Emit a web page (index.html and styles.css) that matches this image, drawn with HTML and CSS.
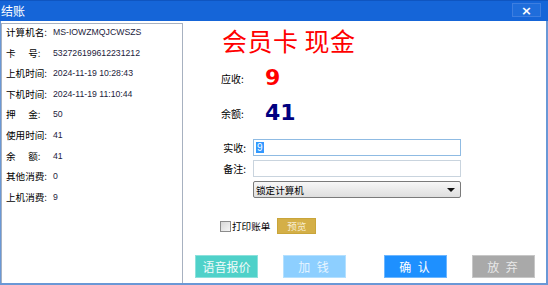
FILE: index.html
```html
<!DOCTYPE html>
<html lang="zh-CN">
  <head>
    <meta charset="UTF-8" />
    <title>结账</title>
    <link rel="stylesheet" href="styles.css">
  </head>
  <body>
    <div class="window">
      <div class="titlebar">
        <span class="title">结账</span>
        <button class="close-btn">×</button>
      </div>

      <div class="main">
        <div class="info-panel">
          <div class="info-row"><span class="info-label">计算机名:</span><span class="info-value">MS-IOWZMQJCWSZS</span></div>
          <div class="info-row"><span class="info-label spread">卡<i></i>号:</span><span class="info-value">532726199612231212</span></div>
          <div class="info-row"><span class="info-label">上机时间:</span><span class="info-value">2024-11-19 10:28:43</span></div>
          <div class="info-row"><span class="info-label">下机时间:</span><span class="info-value">2024-11-19 11:10:44</span></div>
          <div class="info-row"><span class="info-label spread">押<i></i>金:</span><span class="info-value">50</span></div>
          <div class="info-row"><span class="info-label">使用时间:</span><span class="info-value">41</span></div>
          <div class="info-row"><span class="info-label spread">余<i></i>额:</span><span class="info-value">41</span></div>
          <div class="info-row"><span class="info-label">其他消费:</span><span class="info-value">0</span></div>
          <div class="info-row"><span class="info-label">上机消费:</span><span class="info-value">9</span></div>
        </div>

        <div class="checkout">
          <h1 class="pay-type">会员卡 现金</h1>

          <div class="amount-row">
            <span class="amount-label">应收:</span>
            <span class="amount-value due">9</span>
          </div>
          <div class="amount-row balance">
            <span class="amount-label">余额:</span>
            <span class="amount-value left">41</span>
          </div>

          <div class="form">
            <div class="form-row">
              <label class="form-label">实收:</label>
              <div class="form-input focused"><span class="selected">9</span></div>
            </div>
            <div class="form-row">
              <label class="form-label">备注:</label>
              <div class="form-input"></div>
            </div>
            <div class="form-row">
              <span class="form-label"></span>
              <div class="form-select">
                <span>锁定计算机</span>
                <span class="arrow"></span>
              </div>
            </div>
          </div>

          <div class="print-row">
            <span class="checkbox"></span>
            <span class="print-label">打印账单</span>
            <button class="preview-btn">预览</button>
          </div>

          <div class="btn-row">
            <button class="btn btn-voice">语音报价</button>
            <button class="btn btn-add">加 钱</button>
            <button class="btn btn-confirm">确 认</button>
            <button class="btn btn-cancel">放 弃</button>
          </div>
        </div>
      </div>
    </div>
  </body>
</html>
```

FILE: styles.css
```css
* {
  box-sizing: border-box;
}

body {
  margin: 0;
  font-family: "Noto Sans CJK SC", "Liberation Sans", sans-serif;
  background-color: #ffffff;
}

.window {
  width: 548px;
  height: 285px;
  display: flex;
  flex-direction: column;
}

.titlebar {
  height: 21px;
  background-color: #1565d8;
  border-top: 1px solid #0f55c0;
  display: flex;
  justify-content: space-between;
  align-items: center;
  padding: 0 7px 0 1px;
}

.title {
  color: #ffffff;
  font-size: 12px;
  line-height: 1;
}

.close-btn {
  width: 29px;
  height: 14px;
  margin-top: -2px;
  padding: 0;
  border: 1px solid #3d7ee0;
  background-color: #1f6ddb;
  color: #ffffff;
  font-family: "DejaVu Sans", sans-serif;
  font-size: 13px;
  font-weight: bold;
  line-height: 11px;
}

.main {
  flex: 1;
  display: flex;
  background-color: #ffffff;
  border-left: 1px solid #6a98d6;
  border-right: 2px solid #6a98d6;
  border-bottom: 2px solid #6a98d6;
}

/* left info list */
.info-panel {
  width: 182px;
  margin-top: 2px;
  border-top: 1px solid #a7b1c0;
  border-left: 1px solid #a7b1c0;
  border-right: 1px solid #a7b1c0;
  padding-left: 4px;
  display: flex;
  flex-direction: column;
  gap: 4.6px;
}

.info-row {
  height: 16px;
  line-height: 16px;
  display: flex;
  align-items: center;
  white-space: nowrap;
}

.info-label {
  width: 47px;
  font-size: 9.6px;
  color: #000000;
}

.info-label.spread {
  display: flex;
}

.info-label.spread i {
  width: 12.6px;
}

.info-value {
  font-family: "Liberation Sans", sans-serif;
  font-size: 8.7px;
  color: #1c1c3c;
}

/* right side */
.checkout {
  flex: 1;
  padding-top: 7px;
}

.pay-type {
  margin: 0 0 0 39px;
  height: 24px;
  font-size: 25px;
  line-height: 24px;
  font-weight: normal;
  color: #ff0000;
  letter-spacing: 0.5px;
  white-space: nowrap;
}

.amount-row {
  margin-top: 14px;
  padding-left: 38px;
  height: 24px;
  display: flex;
  align-items: center;
}

.amount-row.balance {
  margin-top: 11px;
}

.amount-label {
  width: 44px;
  font-size: 10px;
  color: #000000;
}

.amount-value {
  font-family: "DejaVu Sans", sans-serif;
  font-size: 22px;
  font-weight: bold;
  line-height: 24px;
}

.due {
  color: #ff0000;
}

.left {
  color: #000080;
}

.form {
  margin-top: 14px;
  display: flex;
  flex-direction: column;
  gap: 4px;
}

.form-row {
  height: 17px;
  display: flex;
  align-items: center;
}

.form-label {
  width: 70px;
  padding-right: 7px;
  text-align: right;
  font-size: 10px;
  color: #000000;
}

.form-input {
  width: 208px;
  height: 17px;
  border: 1px solid #c9d4de;
  background-color: #ffffff;
  padding: 2px 2px;
  display: flex;
  align-items: center;
}

.form-input.focused {
  border-color: #8fbbe3;
}

.selected {
  background-color: #3399ff;
  color: #ffffff;
  font-family: "Liberation Sans", sans-serif;
  font-size: 10px;
  line-height: 11px;
  padding: 0 1px;
}

.form-select {
  width: 208px;
  height: 17px;
  border: 1px solid #7a7a7a;
  border-radius: 2px;
  background: linear-gradient(#f7f7f7, #dedede);
  display: flex;
  justify-content: space-between;
  align-items: center;
  padding: 0 5px 0 2px;
  font-size: 9.6px;
  color: #000000;
}

.arrow {
  width: 0;
  height: 0;
  border-left: 4px solid transparent;
  border-right: 4px solid transparent;
  border-top: 4px solid #111111;
}

.print-row {
  margin-top: 20px;
  padding-left: 37px;
  height: 16px;
  display: flex;
  align-items: center;
}

.checkbox {
  width: 11px;
  height: 11px;
  border: 1px solid #8c8c8c;
  background: linear-gradient(135deg, #d8d8d8, #f6f6f6);
}

.print-label {
  margin-left: 1px;
  font-size: 9.6px;
  color: #000000;
}

.preview-btn {
  margin-left: 7px;
  width: 39px;
  height: 16px;
  padding: 0;
  border: 1px solid #c9a53a;
  background-color: #d4af47;
  color: #f7ecd0;
  font-family: "Noto Sans CJK SC", sans-serif;
  font-size: 9.6px;
  line-height: 14px;
}

.btn-row {
  margin-top: 21px;
  padding-left: 12px;
  display: flex;
  gap: 25px;
}

.btn {
  width: 63px;
  height: 23px;
  padding: 0;
  border: 1px solid rgba(255, 255, 255, 0.35);
  font-family: "Noto Sans CJK SC", sans-serif;
  font-size: 12px;
  line-height: 21px;
  color: #ffffff;
}

.btn-voice {
  background-color: #4fd1c9;
  color: #f2fbfa;
}

.btn-add {
  background-color: #8dcfff;
  color: #e6f4ff;
  letter-spacing: 2px;
}

.btn-confirm {
  margin-left: 13px;
  background-color: #1e90ff;
  letter-spacing: 2px;
}

.btn-cancel {
  background-color: #a9a9a9;
  color: #e8e8e8;
  letter-spacing: 2px;
}
```
